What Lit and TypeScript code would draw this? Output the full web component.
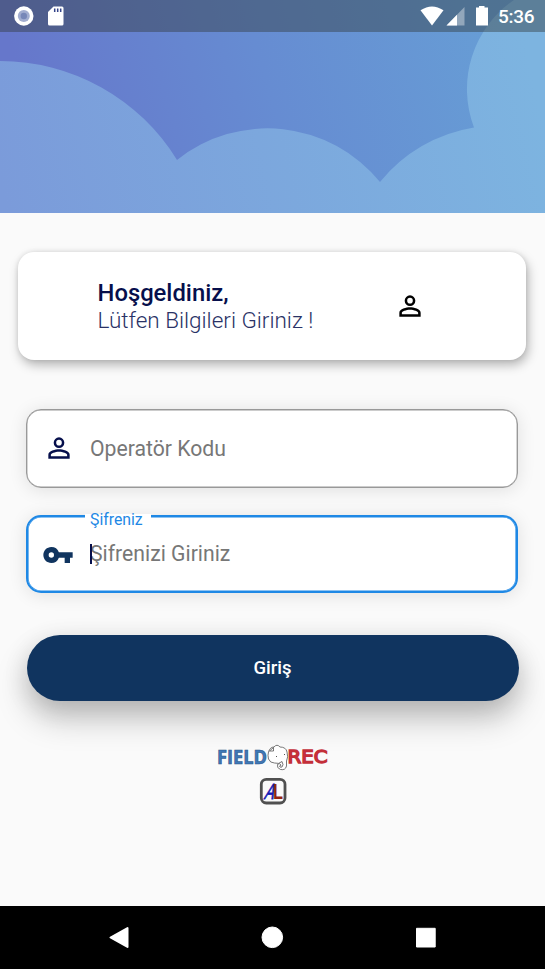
import { LitElement, html, css, svg } from "lit";
import { customElement } from "lit/decorators.js";

const personPath = svg`<path fill="currentColor" d="M12 5.9a2.1 2.1 0 1 1 0 4.2 2.1 2.1 0 0 1 0-4.2m0 9c2.97 0 6.1 1.46 6.1 2.1v1.1H5.9V17c0-.64 3.13-2.1 6.1-2.1M12 4a4 4 0 1 0 0 8 4 4 0 0 0 0-8zm0 9c-2.67 0-8 1.34-8 4v3h16v-3c0-2.66-5.33-4-8-4z"/>`;

@customElement("app-root")
export class AppRoot extends LitElement {
  static styles = css`
    :host {
      display: flex;
      flex-direction: column;
      width: 100%;
      height: 969px;
      overflow: hidden;
      background: #fafafa;
      font-family: Roboto, "Noto Sans", sans-serif;
      color: #060f4c;
    }
    * { box-sizing: border-box; }
    svg { display: block; flex: none; }
    .hero { position: relative; height: 213px; flex: none; }
    .status {
      position: absolute;
      inset: 0 0 auto 0;
      height: 32px;
      display: flex;
      align-items: center;
      justify-content: space-between;
      background: rgba(48, 56, 56, 0.42);
    }
    .clock { font-size: 19px; font-weight: 500; fill: #fff; }
    main { flex: 1; display: flex; flex-direction: column; align-items: center; padding: 39px 1px 0 0; }
    .card {
      width: 508px;
      height: 108px;
      border-radius: 16px;
      background: #fff;
      box-shadow: 2px 5px 11px rgba(0, 0, 0, 0.28), 0 0 5px rgba(0, 0, 0, 0.1);
      display: flex;
      align-items: center;
      padding: 2px 100px 0 79.5px;
      justify-content: space-between;
    }
    .greet { font-size: 23.8px; line-height: 27.5px; white-space: nowrap; }
    .hello { font-weight: 500; }
    .hint { font-weight: 300; font-size: 22.5px; color: #2a3266; }
    .person { color: #000; margin-top: -2px; }
    .field {
      width: 492px;
      height: 79px;
      border: 1px solid #999;
      border-radius: 15px;
      background: #fff;
      box-shadow: inset 0 0 0 0.4px #999, 0 2px 18px rgba(0, 0, 0, 0.11);
      margin-top: 49px;
      display: flex;
      align-items: center;
      font-size: 21.2px;
      color: #777;
      position: relative;
    }
    .field.focus {
      margin-top: 27px;
      height: 78px;
      border: 2px solid #1e88e5;
      box-shadow: inset 0 0 0 0.6px #1e88e5, 0 2px 18px rgba(0, 0, 0, 0.11);
    }
    .icon { width: 63px; padding-left: 18.5px; color: #060f4c; }
    .icon svg { margin-top: -1px; }
    .focus .icon { width: 62px; padding-left: 14px; color: #10345f; }
    .focus .icon svg { margin-top: 1px; }
    .floating {
      position: absolute;
      z-index: 1;
      left: 57px;
      top: -9px;
      padding: 0 8px 0 5px;
      font-size: 15.8px;
      line-height: 20px;
      color: #1e88e5;
      background: linear-gradient(transparent 6px, #fff 6px, #fff 14px, transparent 14px);
    }
    .floating span { position: relative; top: 2px; }
    .caret { width: 2px; height: 20px; background: #060f4c; margin-right: -2px; z-index: 1; }
    .entry { position: relative; top: -1px; }
    .button {
      width: 492px;
      height: 66px;
      margin: 42px 0 0 1px;
      border: 0;
      border-radius: 33px;
      background: #10345f;
      color: #fff;
      font: 500 18.5px Roboto, sans-serif;
      box-shadow: 0 18px 32px rgba(0, 0, 0, 0.22), 0 6px 26px rgba(0, 0, 0, 0.12);
    }
    .brand { margin-top: 42px; }
    .badge { margin: 5px 0 0 1px; }
    nav { height: 63px; background: #000; flex: none; }
  `;

  render() {
    return html`
      <header class="hero">
        <svg width="545" height="213" viewBox="0 0 545 213">
          <defs>
            <linearGradient id="sky" gradientUnits="userSpaceOnUse" x1="30" y1="110" x2="530" y2="-40">
              <stop offset="0" stop-color="#6677cb" />
              <stop offset=".45" stop-color="#668cd2" />
              <stop offset="1" stop-color="#67a1d6" />
            </linearGradient>
            <linearGradient id="cloud" gradientUnits="userSpaceOnUse" x1="0" y1="180" x2="530" y2="60">
              <stop offset="0" stop-color="#7b9bda" />
              <stop offset="1" stop-color="#7db4e0" />
            </linearGradient>
          </defs>
          <rect width="545" height="213" fill="url(#sky)" />
          <path fill="url(#cloud)" d="M0 61A207.500 207.500 0 0 1 177 160A145 145 0 0 1 380 182A152 152 0 0 1 474 127.500A108 108 0 0 1 514 0H545V213H0Z" />
        </svg>
        <div class="status">
          <svg width="80" height="32" viewBox="0 0 80 32">
            <circle cx="23.800" cy="16" r="9.700" fill="#fff" />
            <circle cx="23.800" cy="16" r="6" fill="#a2add0" />
            <circle cx="23.800" cy="16" r="3.200" fill="#7787b8" />
            <path fill="#fff" d="M53.500 6.500H62q1.500 0 1.500 1.500V24q0 1.500-1.500 1.500H49.500Q48 25.500 48 24V12Z" />
            <path stroke="#34448a" stroke-width="1.500" d="M54.700 8.500v3.500M57.700 8.500v3.500M60.700 8.500v3.500" />
          </svg>
          <svg width="130" height="32" viewBox="415 0 130 32">
            <path fill="#fff" d="M420.500 10.300Q432 2.500 443.500 10.300L432 25.500Z" />
            <path fill="#fff" fill-opacity=".38" d="M464.500 7V25.500H446.500Z" />
            <path fill="#fff" d="M457 14.700V25.500H446.500Z" />
            <path fill="#fff" d="M479 6h5.500v1.500h3.500v18h-12v-18h3z" />
            <text class="clock" x="498" y="23.300" textLength="36.500">5:36</text>
          </svg>
        </div>
      </header>
      <main>
        <section class="card">
          <div class="greet">
            <div class="hello">Hoşgeldiniz,</div>
            <div class="hint">Lütfen Bilgileri Giriniz !</div>
          </div>
          <svg class="person" width="32" height="32" viewBox="0 0 24 24">${personPath}</svg>
        </section>
        <div class="field">
          <div class="icon"><svg width="32" height="32" viewBox="0 0 24 24" transform="translate(-3 0)">${personPath}</svg></div>
          <span>Operatör Kodu</span>
        </div>
        <div class="field focus">
          <div class="floating"><span>Şifreniz</span></div>
          <div class="icon">
            <svg width="32" height="32" viewBox="0 0 24 24"><path fill="currentColor" d="M12.650 10A5.990 5.990 0 0 0 7 6c-3.310 0-6 2.690-6 6s2.690 6 6 6a5.990 5.990 0 0 0 5.650-4H17v4h4v-4h2v-4zM7 14a2 2 0 1 1 0-4 2 2 0 0 1 0 4z" /></svg>
          </div>
          <i class="caret"></i><span class="entry">Şifrenizi Giriniz</span>
        </div>
        <button class="button">Giriş</button>
        <svg class="brand" width="112" height="29" viewBox="216 743 112 29">
          <text x="217" y="763.500" font-family="Open Sans" font-weight="700" font-size="19" textLength="50" lengthAdjust="spacingAndGlyphs" fill="#3e79b7" stroke="#2c5186" stroke-width=".6">FIELD</text>
          <text x="287.500" y="763.200" font-family="DejaVu Sans" font-size="18" textLength="40" lengthAdjust="spacingAndGlyphs" fill="#d7333e" stroke="#c32e39" stroke-width="1.400">REC</text>
          <g fill="none" stroke="#555" stroke-width=".8" stroke-linejoin="round">
            <path fill="#fff" d="M268.500 752Q270 747 274 747Q277 743.500 280 747Q286 747 287 752Q288.500 757 286.500 761V766Q285.500 770.500 280.500 769.500Q276.500 768 277.500 764.500Q279.500 762.500 281 765Q280.500 766.500 279.500 766Q280 768 282 767Q284 765 282 761.500Q279 764.500 274.500 763Q270 763 268.500 759Q267.500 755 268.500 752Z" />
            <path d="M269.500 751l4-3.500v3.500z" />
            <path stroke-width="1.200" d="M276 756.500h1M284 754.500h1" />
          </g>
        </svg>
        <svg class="badge" width="28" height="28" viewBox="258 777 28 28">
          <rect x="260.300" y="779.300" width="23.700" height="23.700" rx="5" fill="#fafafa" stroke="#505050" stroke-width="2.800" />
          <text transform="translate(262.500 799) skewX(-20)" font-family="Liberation Sans" font-size="22" textLength="9.500" lengthAdjust="spacingAndGlyphs" fill="#1519b6" stroke="#1519b6" stroke-width=".8">A</text>
          <text x="272" y="799" font-family="Liberation Sans" font-weight="700" font-size="22" textLength="10" lengthAdjust="spacingAndGlyphs" fill="#94240f">L</text>
        </svg>
      </main>
      <nav>
        <svg width="545" height="63" viewBox="0 0 545 63">
          <g fill="#fff" stroke="#fff" stroke-linejoin="round">
            <path stroke-width="2" d="M110.500 31.500L127.500 22V41Z" />
            <circle cx="272.300" cy="31.300" r="10.300" />
            <rect x="416.500" y="22.300" width="18.700" height="18.700" />
          </g>
        </svg>
      </nav>
    `;
  }
}
